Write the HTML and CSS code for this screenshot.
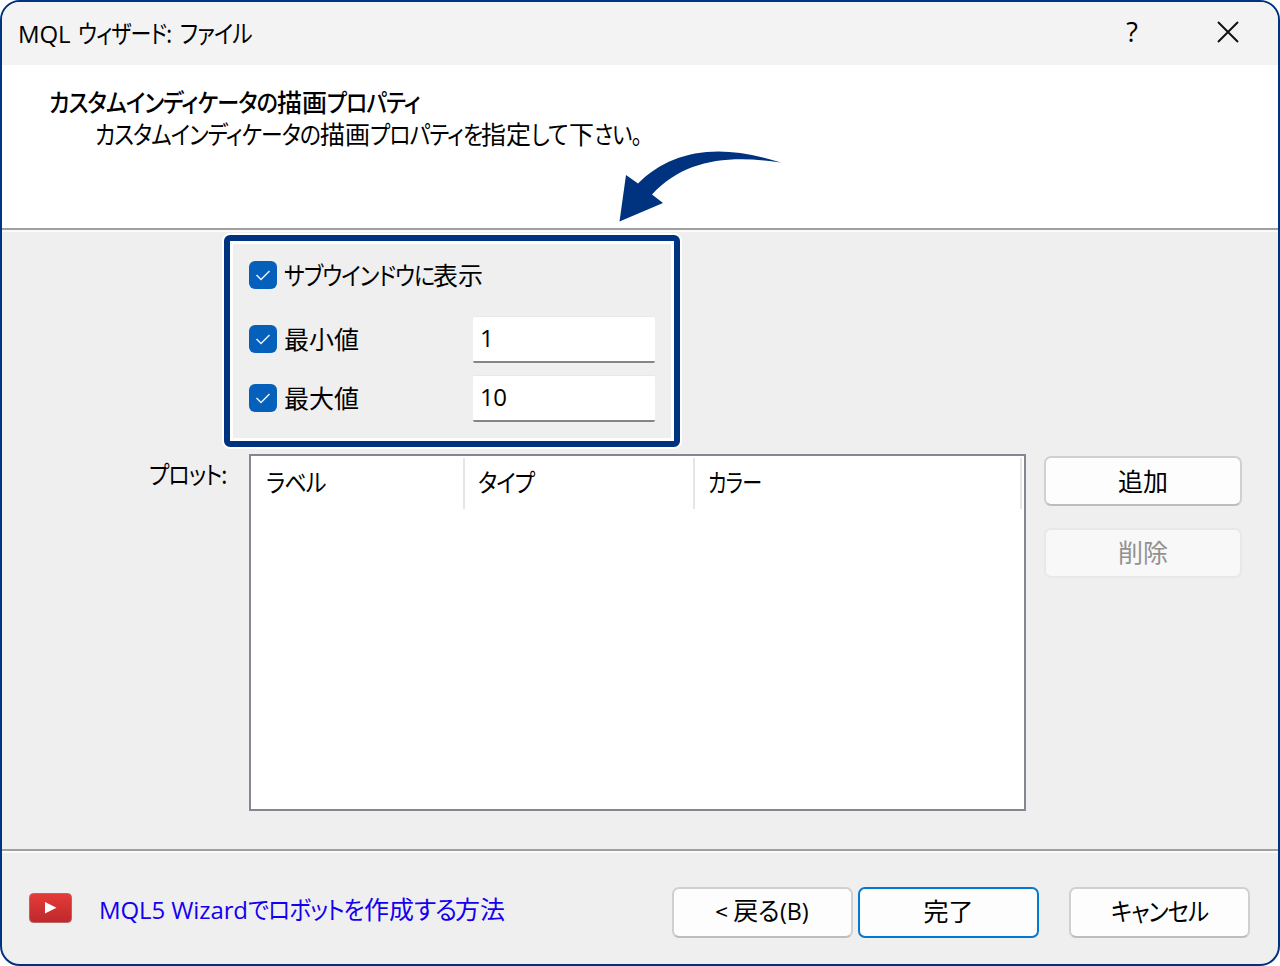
FILE: index.html
```html
<!DOCTYPE html>
<html lang="ja">
<head>
<meta charset="utf-8">
<title>MQL ウィザード: ファイル</title>
<link rel="stylesheet" href="styles.css">
</head>
<body>
<div class="window">
  <header class="titlebar">
    <h1 class="title"><span class="latin">MQL</span> <span class="kana k-wizard">ウィザード:</span> <span class="kana k-file">ファイル</span></h1>
    <span class="help">?</span>
    <svg class="close" viewBox="0 0 24 24"><path d="M2 2 22 22M22 2 2 22"/></svg>
  </header>
  <section class="intro">
    <h2 class="intro-title"><span class="kana k-indicator-bold">カスタムインディケータの</span>描画<span class="kana k-property-bold">プロパティ</span></h2>
    <p class="intro-text"><span class="kana k-indicator">カスタムインディケータの</span>描画<span class="kana k-property">プロパティを</span>指定<span class="kana k-shite">して</span>下<span class="kana k-sai">さい。</span></p>
    <svg class="arrow" viewBox="0 0 164 72"><path d="M.5 70.500 7 24 19 32.500C52 0 98 -9 162 11.500C110 4 66 8 33 43.500L44 52Z"/></svg>
  </section>
  <main class="content">
    <div class="options">
      <label class="option first"><svg class="check" viewBox="0 0 28 28"><path d="M7.500 14 12 18.500 20.500 10"/></svg><span class="caption"><span class="kana k-subwindow">サブウインドウに</span>表示</span></label>
      <div class="row"><label class="option"><svg class="check" viewBox="0 0 28 28"><path d="M7.500 14 12 18.500 20.500 10"/></svg><span class="caption">最小値</span></label><div class="field">1</div></div>
      <div class="row"><label class="option"><svg class="check" viewBox="0 0 28 28"><path d="M7.500 14 12 18.500 20.500 10"/></svg><span class="caption">最大値</span></label><div class="field">10</div></div>
    </div>
    <div class="plots">
      <div class="plot-label"><span class="kana k-plot">プロット:</span></div>
      <div class="list">
        <div class="columns"><div class="col"><span class="kana k-label">ラベル</span></div><div class="col"><span class="kana k-type">タイプ</span></div><div class="col"><span class="kana k-color">カラー</span></div></div>
      </div>
      <div class="actions">
        <div class="button">追加</div>
        <div class="button disabled">削除</div>
      </div>
    </div>
  </main>
  <footer class="footer">
    <svg class="video" viewBox="0 0 43 30"><defs><linearGradient id="red" x1="0" y1="0" x2="0" y2="1"><stop offset="0" stop-color="#e53b38"/><stop offset="1" stop-color="#bd282d"/></linearGradient></defs><rect x=".5" y=".5" width="42" height="29" rx="4" fill="url(#red)" stroke="#b96562"/><path d="M16 9 27.500 14.700 16 20.500Z" fill="#fff"/></svg>
    <a class="link"><span class="latin">MQL5 Wizard</span><span class="kana k-robot">でロボットを</span>作成<span class="kana k-suru">する</span>方法</a>
    <div class="button"><span><span class="less">&lt;</span> 戻<span class="kana k-ru">る</span><span class="latin access">(B)</span></span></div>
    <div class="button primary">完了</div>
    <div class="button cancel"><span class="kana k-cancel">キャンセル</span></div>
  </footer>
</div>
</body>
</html>
```
FILE: styles.css
```css
* { box-sizing: border-box; }
body { margin: 0; background: #fff; }
.window {
  width: 1280px; height: 966px;
  display: flex; flex-direction: column;
  border: 2px solid #00337f; border-radius: 20px;
  overflow: hidden; background: #efefef; color: #000;
  font: 25px/32px "Noto Sans CJK JP", sans-serif;
  white-space: nowrap;
}
h1, h2, p { margin: 0; font-size: inherit; font-weight: 400; }

/* Condensed kana: --n is the natural run width, --w the condensed one */
.kana {
  display: inline-block;
  width: calc(var(--n) * 1px);
  margin-right: calc((var(--w) - var(--n)) * 1px);
  transform: scaleX(calc(var(--w) / var(--n)));
  transform-origin: 0 50%;
  font-feature-settings: "palt"; letter-spacing: -1px;
  text-align: left;
}
.k-wizard { --n: 112; --w: 94; }
.k-file { --n: 84; --w: 73; }
.k-indicator-bold { --n: 258; --w: 228; }
.k-property-bold { --n: 108; --w: 94; }
.k-indicator { --n: 258; --w: 225; }
.k-property { --n: 127; --w: 111; }
.k-shite { --n: 43; --w: 38; }
.k-sai { --n: 56; --w: 48; }
.k-subwindow { --n: 169; --w: 149; }
.k-plot { --n: 90; --w: 79; }
.k-label { --n: 69; --w: 61; }
.k-type { --n: 66; --w: 58; }
.k-color { --n: 66; --w: 53; }
.k-robot { --n: 128; --w: 116; }
.k-suru { --n: 42; --w: 41; }
.k-ru { --n: 23; --w: 22; }
.k-cancel { --n: 109; --w: 98; }

.latin { font-family: "Open Sans", sans-serif; font-size: 24px; letter-spacing: -.1px; }
.titlebar { height: 63px; flex: none; display: flex; align-items: center; background: #f3f3f3; padding: 0 38px 2px 16px; }
.title { flex: 1; word-spacing: 2px; }
.help { width: 14px; margin: -2px 77px 0 0; text-align: center; font: 500 27px "Open Sans", sans-serif; }
.close { width: 24px; height: 24px; margin-top: -2px; fill: none; stroke: #111; stroke-width: 2; }
.intro { position: relative; height: 165px; flex: none; padding: 20px 0 0 47px; background: #fff; border-bottom: 2px solid #a0a0a0; }
.intro-title { font-weight: 500; }
.intro-text { padding-left: 46px; }
.arrow { position: absolute; left: 617px; top: 86px; width: 164px; height: 72px; overflow: visible; fill: #00337f; }
.content { height: 621px; flex: none; border-top: 2px solid #fafafa; }
.options {
  width: 456px; height: 212px; margin: 3px 0 0 222px; padding: 17px 19px;
  border: 6px solid #00337f; border-radius: 6px;
  box-shadow: 0 0 0 2px #fff, inset 0 0 0 3px #fff;
}
.option { display: flex; align-items: center; gap: 7px; }
.caption { margin-top: -2px; }
.first { height: 34px; margin-bottom: 24px; }
.check { width: 28px; height: 28px; border-radius: 6px; background: #0560bb; fill: none; stroke: #e8f2fb; stroke-width: 1.5; }
.row { height: 47px; margin-bottom: 12px; display: flex; align-items: center; justify-content: space-between; }
.row .check { margin-top: -2px; }
.row .caption { margin-top: -4px; }
.field { width: 182px; height: 47px; padding: 4px 7px; background: #fff; border-top: 1px solid #e8e8e8; border-bottom: 2px solid #858585; border-radius: 2px; font: 24px/33px "Open Sans", sans-serif; letter-spacing: -.5px; }
.plots { display: flex; margin-top: 7px; }
.plot-label { width: 247px; padding: 3px 0 0 147px; }
.list { width: 777px; height: 357px; border: 2px solid #828790; background: #fff; }
.columns { display: flex; height: 51px; margin-top: 2px; }
.col { padding: 7px 0 0 13px; border-right: 2px solid #e5e5e5; }
.col:nth-child(1) { width: 214px; padding-left: 15px; }
.col:nth-child(2) { width: 230px; }
.col:nth-child(3) { width: 327px; }
.actions { display: flex; flex-direction: column; gap: 22px; margin: 2px 0 0 18px; }
.button { width: 198px; height: 50px; padding-bottom: 3px; display: flex; align-items: center; justify-content: center; border: 2px solid #d0d0d0; border-bottom-color: #bdbdbd; border-radius: 7px; background: #fdfdfd; white-space: pre; }
.disabled { padding-bottom: 5px; color: #919191; background: #f8f8f8; border-color: #e8e8e8; }
.footer { flex: 1; display: flex; align-items: flex-start; padding: 34px 0 0 27px; border-top: 2px solid #fafafa; box-shadow: 0 -2px #a0a0a0; }
.footer .button { width: 181px; height: 51px; margin-right: 5px; padding-bottom: 6px; }
.footer .primary { border-color: #0078d4; margin-right: 30px; }
.less { font-size: 22px; }
.access { display: inline-block; transform: scaleX(.97); transform-origin: 0 50%; }
.video { width: 43px; height: 30px; margin-top: 6px; }
.link { width: 573px; margin: 5px 0 0 27px; color: #1400f0; }
```
